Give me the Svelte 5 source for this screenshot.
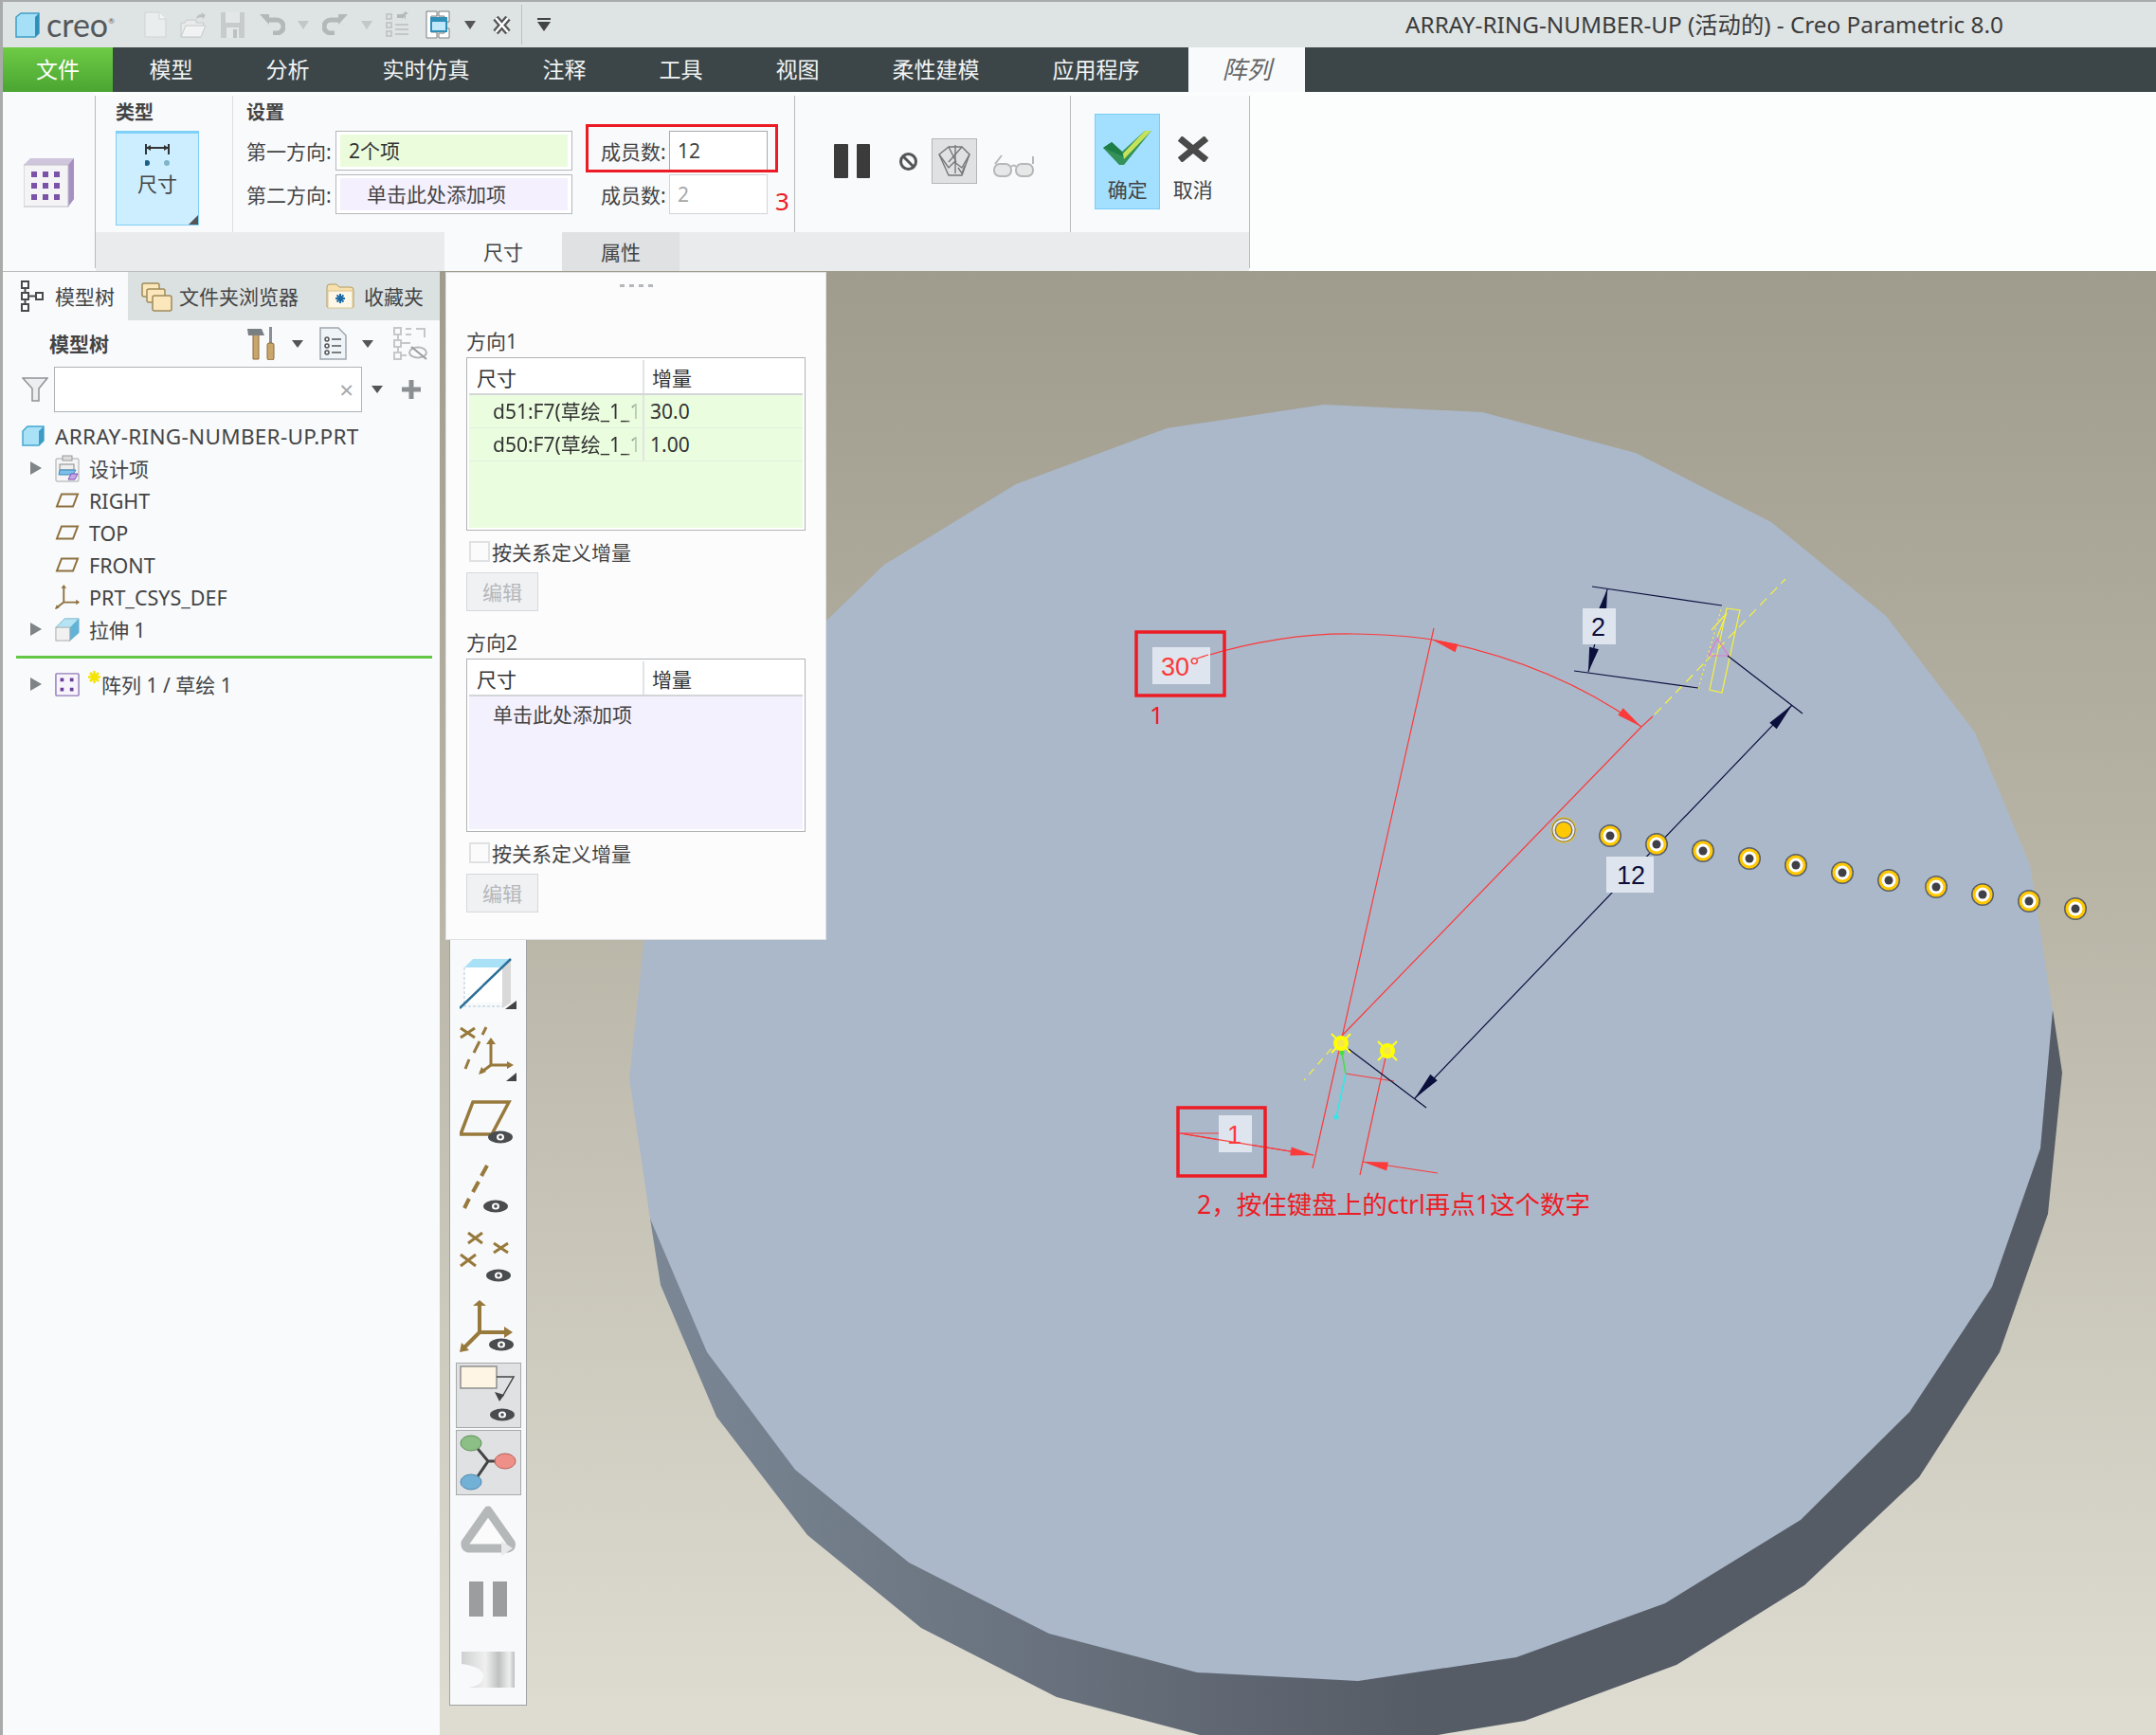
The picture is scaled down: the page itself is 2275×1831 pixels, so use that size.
<script>
  const tabs = ['模型', '分析', '实时仿真', '注释', '工具', '视图', '柔性建模', '应用程序'];

  const facePts = '686,1286 664,1138 680,990 745,830 870,657 933,596 1072,511 1231,452 1397,427 1564,435 1726,478 1869,551 1990,650 2084,773 2142,913 2165,1061 2166,1066 2153,1212 2102,1358 2015,1490 1900,1604 1757,1692 1600,1749 1433,1774 1263,1765 1107,1724 959,1649 839,1551 746,1427';
  const sidePts = '686,1286 697,1356 756,1495 852,1620 972,1718 1115,1791 1266,1831 1517,1831 1609,1816 1769,1757 1904,1673 2025,1559 2110,1427 2161,1281 2176,1132 2166,1066 1433,1500';

  const dots = [
    [1699, 882], [1748, 891], [1797, 898], [1846, 906], [1895, 913], [1944, 921],
    [1993, 929], [2043, 936], [2092, 944], [2141, 951], [2190, 959]
  ];

  // arrow head as polygon points, tip first
  function head(tx, ty, fx, fy, w = 4.5) {
    const dx = fx - tx, dy = fy - ty;
    const l = Math.hypot(dx, dy);
    const nx = -dy / l * w, ny = dx / l * w;
    return `${tx},${ty} ${fx + nx},${fy + ny} ${fx - nx},${fy - ny}`;
  }

  const rows = [
    { label: 'RIGHT', kind: 'plane' },
    { label: 'TOP', kind: 'plane' },
    { label: 'FRONT', kind: 'plane' },
    { label: 'PRT_CSYS_DEF', kind: 'csys' }
  ];
</script>

{#snippet eye(x, y)}
  <ellipse cx={x} cy={y} rx="13" ry="6.5" fill="#4a4d50" />
  <ellipse cx={x} cy={y} rx="4" ry="3.5" fill="#fff" />
  <circle cx={x} cy={y} r="1.8" fill="#4a4d50" />
{/snippet}

{#snippet caret()}
  <svg class="caret" width="12" height="8" viewBox="0 0 12 8"><path d="M0 0h12L6 8z" fill="#555" /></svg>
{/snippet}

{#snippet labelBox(x, y, w, h)}
  <rect {x} {y} width={w} height={h} fill="#dfe5ee" />
{/snippet}

<div class="app">
  <header class="titlebar">
    <div class="logo">
      <svg width="26" height="27" viewBox="0 0 26 27">
        <path d="M1 5 6 1h19v21l-4 4H1z" fill="#a6e0f7" stroke="#3f9fc9" stroke-width="1.5" />
        <path d="M21 5v21l4-4V1z" fill="#2f8fb8" />
      </svg>
      <span class="wordmark">creo<sup>®</sup></span>
    </div>
    <div class="quick">
      <svg width="24" height="28" viewBox="0 0 24 28"><path d="M1 1h15l7 7v19H1z" fill="#eaeded" stroke="#cfd3d3" /><path d="M16 1v7h7" fill="#f5f6f6" stroke="#cfd3d3" /></svg>
      <svg width="28" height="28" viewBox="0 0 28 28"><path d="M1 12h4l2-3h10v3h8l-4 15H1z" fill="#e9ebeb" stroke="#c6caca" /><path d="M1 27l5-12h21l-5 12z" fill="#f1f2f2" stroke="#c6caca" /><path d="M17 8q1-5 6-5l-1-2 5 3-3 4-1-2q-4 0-6 2z" fill="#bcc0c0" /></svg>
      <svg width="27" height="28" viewBox="0 0 27 28"><path d="M1 1h25v27H1z" fill="#c7cbcb" /><path d="M6 1h15v11H6z" fill="#e4e7e7" /><path d="M7 17h13v11H7z" fill="#e4e7e7" /><path d="M14 19h4v9h-4z" fill="#bcc0c0" /></svg>
      <svg width="28" height="22" viewBox="0 0 28 22"><path d="M11 6h8a7 7 0 0 1 0 14h-4" fill="none" stroke="#b3b8b8" stroke-width="5" /><path d="M1 0h10v11z" fill="#b3b8b8" /></svg>
      <svg class="q-caret" width="12" height="9" viewBox="0 0 12 9"><path d="M0 0h12L6 9z" fill="#c3c7c7" /></svg>
      <svg width="28" height="22" viewBox="0 0 28 22"><path d="M17 6H9a7 7 0 0 0 0 14h4" fill="none" stroke="#b3b8b8" stroke-width="5" /><path d="M27 0H17v11z" fill="#b3b8b8" /></svg>
      <svg class="q-caret" width="12" height="9" viewBox="0 0 12 9"><path d="M0 0h12L6 9z" fill="#c3c7c7" /></svg>
      <svg width="25" height="28" viewBox="0 0 25 28"><g fill="none" stroke="#c3c7c7" stroke-width="2"><rect x="1" y="3" width="5" height="5" /><rect x="1" y="12" width="5" height="5" /><rect x="1" y="21" width="5" height="5" /><path d="M10 14h14M10 19h14M10 24h14" /></g><path d="M12 3l6 0-2-3 4 5-4 5 2-3h-6z" fill="#b3b8b8" /><path d="M21 9V3l3 0-3-3-3 3z" fill="#b3b8b8" /></svg>
      <svg class="q-win" width="26" height="30" viewBox="0 0 26 30"><path d="M1 1h11v5H6v17h6v6H1zM14 1h11v11h-5V6h-6zM20 19h5v10H14v-5h6z" fill="#fff" stroke="#7a7f7f" /><rect x="6" y="8" width="16" height="14" fill="#bfe8fb" stroke="#2f8fb8" stroke-width="2" /><rect x="6" y="8" width="16" height="4" fill="#2f8fb8" /></svg>
      <svg class="q-caret2" width="12" height="9" viewBox="0 0 12 9"><path d="M0 0h12L6 9z" fill="#555" /></svg>
      <svg class="q-close" width="21" height="23" viewBox="0 0 21 23"><path d="M4 4l13 15M17 4 4 19" stroke="#555" stroke-width="7" fill="none" /><path d="M4 4l13 15M17 4 4 19" stroke="#fff" stroke-width="2.5" fill="none" /></svg>
      <i class="q-sep"></i>
      <svg class="q-more" width="14" height="14" viewBox="0 0 14 14"><path d="M0 0h14v2H0zM0 4h14L7 14z" fill="#444" /></svg>
    </div>
    <div class="app-title">ARRAY-RING-NUMBER-UP (活动的) - Creo Parametric 8.0</div>
  </header>

  <nav class="tabbar">
    <div class="file-tab">文件</div>
    {#each tabs as t}
      <div class="tab">{t}</div>
    {/each}
    <div class="tab-pattern">阵列</div>
  </nav>

  <section class="ribbon">
    <div class="rb-icon">
      <svg width="54" height="53" viewBox="0 0 54 53">
        <path d="M0 8 7 1h46v43l-6 8H0z" fill="#cfc6de" />
        <path d="M47 8v44l6-8V1z" fill="#a78fc4" />
        <rect x="0" y="8" width="47" height="44" fill="#f4f4f6" stroke="#bdbdc4" />
        {#each [0, 1, 2] as r}
          {#each [0, 1, 2] as c}
            <rect x={8 + c * 12} y={15 + r * 12} width="6" height="6" fill="#7a52a8" />
          {/each}
        {/each}
      </svg>
    </div>
    <div class="rb-main">
      <div class="rb-groups">
        <div class="grp grp-type">
          <div class="grp-title">类型</div>
          <div class="type-btn">
            <svg width="26" height="24" viewBox="0 0 26 24">
              <path d="M1 1v11M25 1v11M1 5h24" stroke="#333" stroke-width="2" fill="none" />
              <path d="M1 5l5-3v6zM25 5l-5-3v6z" fill="#333" />
              <circle cx="2" cy="21" r="3" fill="#1c5f88" /><circle cx="23" cy="21" r="3" fill="#7fb4c9" />
            </svg>
            <span>尺寸</span>
            <i class="corner"></i>
          </div>
        </div>
        <div class="grp grp-set">
          <div class="grp-title">设置</div>
          <div class="set-grid">
            <span class="lbl">第一方向:</span>
            <div class="coll"><div class="fill green">2个项</div></div>
            <span class="lbl lbl-n">成员数:</span>
            <div class="num">12</div>
            <span></span>

            <span class="lbl">第二方向:</span>
            <div class="coll"><div class="fill lav">单击此处添加项</div></div>
            <span class="lbl lbl-n">成员数:</span>
            <div class="num off">2</div>
            <span class="red3">3</span>
          </div>
          <i class="redbox"></i>
        </div>
        <div class="grp grp-ctl">
          <svg class="pause" width="38" height="36" viewBox="0 0 38 36"><rect x="0" width="15" height="36" rx="1" fill="#3b3b3b" /><rect x="24" width="14" height="36" rx="1" fill="#3b3b3b" /></svg>
          <svg class="stop" width="21" height="21" viewBox="0 0 21 21"><circle cx="10.5" cy="10.5" r="8" fill="none" stroke="#555" stroke-width="3" /><path d="M5 5l11 11" stroke="#555" stroke-width="3" /></svg>
          <div class="preview">
            <svg width="36" height="38" viewBox="0 0 36 38"><g fill="none" stroke="#777" stroke-width="1.4"><path d="M2 12 12 4h14l8 8-8 22H12z" /><path d="M12 4 20 20M26 4 12 20M2 12l10 14 6-6 8 6 8-14" /><path d="M19 2v30M29 24l-3 8-4-6" /></g></svg>
          </div>
          <svg class="glasses" width="45" height="25" viewBox="0 0 45 25"><g fill="#e6e8e8" stroke="#b5b8b8" stroke-width="2"><rect x="2" y="11" width="18" height="13" rx="6" /><rect x="25" y="11" width="18" height="13" rx="6" /></g><path d="M20 14q3-3 5 0M3 11 10 2M43 11V3" fill="none" stroke="#b5b8b8" stroke-width="2" /></svg>
        </div>
        <div class="grp grp-act">
          <div class="act ok">
            <svg width="51" height="36" viewBox="0 0 51 36"><path d="M0 18 9 12 20 22 44 0h7L22 36h-5z" fill="#33915a" /><path d="M44 0h7L22 30 21 24z" fill="#c4e35a" /><path d="M0 18 9 12 20 22 21 27z" fill="#1f7d46" /></svg>
            <span>确定</span>
          </div>
          <div class="act">
            <svg width="34" height="27" viewBox="0 0 34 27"><path d="M3 2l28 23M31 2 3 25" stroke="#4a4a4a" stroke-width="7" fill="none" /></svg>
            <span class="cancel">取消</span>
          </div>
        </div>
      </div>
      <div class="strip">
        <div class="strip-tab active">尺寸</div>
        <div class="strip-tab">属性</div>
      </div>
    </div>
  </section>

  <main class="workspace">
    <aside class="left">
      <div class="l-tabs">
        <div class="l-tab active">
          <svg width="24" height="33" viewBox="0 0 24 33"><g fill="#fff" stroke="#4a4a4a" stroke-width="2"><rect x="1" y="1" width="7" height="7" /><rect x="1" y="13" width="7" height="7" /><rect x="1" y="25" width="7" height="7" /><rect x="16" y="13" width="7" height="7" /></g><path d="M4.500 8v5M4.500 20v5M8 16.500h8" stroke="#4a4a4a" stroke-width="2" /></svg>
          <span>模型树</span>
        </div>
        <div class="l-tab t2">
          <svg width="33" height="33" viewBox="0 0 33 33"><g fill="#fbe7bb" stroke="#a08a5a" stroke-width="1.500"><rect x="1" y="3" width="18" height="14" rx="2" /><rect x="6" y="9" width="19" height="14" rx="2" /><rect x="12" y="16" width="20" height="16" rx="2" /></g></svg>
          <span>文件夹浏览器</span>
        </div>
        <div class="l-tab t3">
          <svg width="30" height="27" viewBox="0 0 30 27"><path d="M1 4q0-3 3-3h7l3 3h12q3 0 3 3v18H1z" fill="#f6e0ae" stroke="#b49a60" /><rect x="2" y="8" width="26" height="18" fill="#fdf7e8" stroke="#d9c48f" /><path d="M15 11v10M10 16h10M11.500 12.500l7 7M18.500 12.500l-7 7" stroke="#1c6aa5" stroke-width="2" /></svg>
          <span>收藏夹</span>
        </div>
      </div>
      <div class="l-head">
        <b>模型树</b>
        <svg class="i-tools" width="30" height="35" viewBox="0 0 30 35"><path d="M6 8h6v26H6z" fill="#c9a66b" stroke="#8a6c3a" /><path d="M0 2h15l3 7H1z" fill="#7a7f84" /><rect x="23" y="0" width="3" height="17" fill="#8a9096" /><rect x="21" y="17" width="7" height="18" rx="2" fill="#c9a66b" stroke="#8a6c3a" /></svg>
        <span class="c1">{@render caret()}</span>
        <svg class="i-doc" width="29" height="35" viewBox="0 0 29 35"><path d="M1 1h19l8 8v25H1z" fill="#eef4f8" stroke="#9fa7ad" stroke-width="1.500" /><g stroke="#555" stroke-width="1.500" fill="none"><circle cx="8" cy="13" r="2" /><circle cx="8" cy="20" r="2" /><circle cx="8" cy="27" r="2" /><path d="M13 13h10M13 20h10M13 27h10" /></g></svg>
        <span class="c2">{@render caret()}</span>
        <svg class="i-hide" width="36" height="35" viewBox="0 0 36 35"><g fill="none" stroke="#c5c8ca" stroke-width="2"><rect x="1" y="1" width="7" height="7" /><rect x="1" y="14" width="7" height="7" /><rect x="1" y="27" width="7" height="7" /><path d="M13 2h6M13 8h6M24 2h9v9M5 8v6M5 21v6M8 17h10M8 30h6" /></g><ellipse cx="26" cy="27" rx="9" ry="5.500" fill="none" stroke="#b5b8ba" stroke-width="2" /><path d="M19 21l16 13" stroke="#9a9da0" stroke-width="2" /></svg>
      </div>
      <div class="l-search">
        <svg width="28" height="26" viewBox="0 0 28 26"><path d="M1 1h26L18 12v13h-7V12z" fill="#eceeef" stroke="#8e9296" stroke-width="1.500" /></svg>
        <div class="s-input"><span>×</span></div>
        <span class="c3">{@render caret()}</span>
        <svg class="plus" width="20" height="20" viewBox="0 0 20 20"><path d="M7.500 0h5v7.500H20v5h-7.500V20h-5v-7.500H0v-5h7.500z" fill="#8c8f92" /></svg>
      </div>
      <div class="tree">
        <div class="row top">
          <svg width="24" height="22" viewBox="0 0 24 22"><path d="M1 6 6 1h17v15l-5 5H1z" fill="#a9e2f7" stroke="#45a7d0" stroke-width="1.500" /><path d="M18 6v15l5-5V1z" fill="#3d9cc6" /></svg>
          <span>ARRAY-RING-NUMBER-UP.PRT</span>
        </div>
        <div class="row">
          <i class="tri"></i>
          <svg width="26" height="29" viewBox="0 0 26 29"><rect x="1" y="4" width="24" height="24" rx="1" fill="#f5f5f5" stroke="#a5a8ab" /><rect x="8" y="1" width="10" height="5" fill="#ddd" stroke="#999" /><rect x="5" y="10" width="15" height="6" fill="#eee" stroke="#888" /><path d="M5 16h17l-3 5H4z" fill="#7cc0ea" stroke="#3d89ba" /><path d="M14 26l3-6h7l-3 6z" fill="#c6a9e6" stroke="#7f4fb5" /></svg>
          <span>设计项</span>
        </div>
        {#each rows as r}
          <div class="row">
            <i class="tri none"></i>
            {#if r.kind === 'plane'}
              <svg width="26" height="16" viewBox="0 0 26 16"><path d="M7 1.500h17L19 14.500H2z" fill="none" stroke="#8d713e" stroke-width="2" /></svg>
            {:else}
              <svg width="26" height="28" viewBox="0 0 28 28"><path d="M10 2v18L1 27M10 20h17" fill="none" stroke="#8d713e" stroke-width="2" /><path d="M10 0l3 4H7zM28 20l-4 3v-6zM0 28l2-5 3 3z" fill="#8d713e" /></svg>
            {/if}
            <span class="lat">{r.label}</span>
          </div>
        {/each}
        <div class="row">
          <i class="tri"></i>
          <svg width="26" height="28" viewBox="0 0 28 28"><path d="M1 12 11 2h16v16L17 27z" fill="#b5e4f4" stroke="#7eb5c9" /><path d="M17 12 27 2v16L17 27z" fill="#62b4d6" /><rect x="1" y="12" width="16" height="15" fill="#f1f1f1" stroke="#a8a8a8" /></svg>
          <span>拉伸 1</span>
        </div>
        <div class="insert"></div>
        <div class="row last">
          <i class="tri"></i>
          <svg width="26" height="27" viewBox="0 0 28 27"><rect x="1" y="1" width="26" height="25" rx="1" fill="#f7f5fb" stroke="#8f79b5" stroke-width="1.500" /><g fill="#6a3f9a"><rect x="6" y="6" width="4" height="4" /><rect x="17" y="6" width="4" height="4" /><rect x="6" y="17" width="4" height="4" /><rect x="17" y="17" width="4" height="4" /></g></svg>
          <svg class="star" width="13" height="13" viewBox="0 0 13 13"><path d="M6.500 0v13M0 6.500h13M2 2l9 9M11 2l-9 9" stroke="#f5e300" stroke-width="2.500" /></svg>
          <span class="tight">阵列 1 / 草绘 1</span>
        </div>
      </div>
    </aside>

    <div class="canvas">
      <svg class="scene" width="1811" height="1545" viewBox="464 286 1811 1545">
        <defs>
          <linearGradient id="bg" x1="0" y1="0" x2="0" y2="1">
            <stop offset="0" stop-color="#9f9c8e" />
            <stop offset="0.45" stop-color="#bab7a9" />
            <stop offset="1" stop-color="#dfddd2" />
          </linearGradient>
          <linearGradient id="side" gradientUnits="userSpaceOnUse" x1="690" y1="0" x2="1500" y2="0">
            <stop offset="0" stop-color="#7b8795" />
            <stop offset="1" stop-color="#565c66" />
          </linearGradient>
        </defs>
        <rect x="464" y="286" width="1811" height="1545" fill="url(#bg)" />
        <polygon points={sidePts} fill="url(#side)" />
        <polygon points={facePts} fill="#abb8ca" />

        <g fill="none" stroke="#fb3a3a" stroke-width="1.200">
          <path d="M1513 663 1385 1233" />
          <path d="M1732 767 1744 756M1732 767 1416 1093" />
          <path d="M1263 695Q1350 668 1428 669 1480 670 1511 675 1640 700 1732 767" />
          <path d="M1462 1116 1435 1240" />
          <path d="M1420 1133 1471 1141" />
          <path d="M1245 1196H1286M1245 1196 1386 1219M1438 1226 1517 1238" />
        </g>
        <polygon points={head(1511, 675, 1537, 684)} fill="#fb3a3a" />
        <polygon points={head(1732, 767, 1710, 751)} fill="#fb3a3a" />
        <polygon points={head(1386, 1219, 1362, 1215)} fill="#fb3a3a" />
        <polygon points={head(1438, 1226, 1464, 1231)} fill="#fb3a3a" />

        <g fill="none" stroke="#f6f23a" stroke-width="1.200">
          <path d="M1746 754 1884 611" stroke-dasharray="10 6" />
          <path d="M1414 1096 1376 1140" stroke-dasharray="8 6" />
          <path d="M1822 642 1836 644 1817 731 1804 728z" />
          <path d="M1792 727 1817 640" stroke-dasharray="2 3" />
          <path d="M1806 665 1822 647 1812 672" />
        </g>
        <path d="M1812 674 1824 692H1803z" fill="none" stroke="#e47ad2" stroke-width="1.200" />

        <g fill="none" stroke="#0b0f3c" stroke-width="1.200">
          <path d="M1823 692 1902 753M1423 1107 1505 1169M1891 744 1493 1159" />
          <path d="M1680 619 1817 639M1661 708 1792 726M1696 622 1676 709" />
        </g>
        <polygon points={head(1891, 744, 1871, 766, 5)} fill="#0b0f3c" />
        <polygon points={head(1493, 1159, 1513, 1137, 5)} fill="#0b0f3c" />
        <polygon points={head(1696, 622, 1690, 648, 5)} fill="#0b0f3c" />
        <polygon points={head(1676, 709, 1682, 684, 5)} fill="#0b0f3c" />

        <path d="M1416 1111 1420 1133" stroke="#43e043" stroke-width="1.500" fill="none" />
        <path d="M1420 1133 1410 1179" stroke="#30e8e8" stroke-width="1.500" fill="none" />
        <circle cx="1416" cy="1111" r="2.500" fill="#43e043" />
        <circle cx="1410" cy="1179" r="2.500" fill="#30e8e8" />
        {#each [[1415, 1101], [1464, 1109]] as [x, y]}
          <path d={`M${x - 10} ${y - 10}L${x + 10} ${y + 10}M${x + 10} ${y - 10}L${x - 10} ${y + 10}`} stroke="#ffff20" stroke-width="2" />
          <circle cx={x} cy={y} r="8" fill="#ffff00" />
          <circle cx={x} cy={y} r="4" fill="#f5e94a" />
        {/each}

        <circle cx="1650" cy="876" r="13.500" fill="#f5c400" />
        <circle cx="1650" cy="876" r="12.500" fill="#6a6a6a" />
        <circle cx="1650" cy="876" r="11.500" fill="#f0f0f0" />
        <circle cx="1650" cy="876" r="9.500" fill="#777" />
        <circle cx="1650" cy="876" r="8" fill="#ffc800" />
        {#each dots as [x, y]}
          <circle cx={x} cy={y} r="12" fill="#5a5f68" />
          <circle cx={x} cy={y} r="10.500" fill="#ffc800" />
          <circle cx={x} cy={y} r="7.500" fill="#fff" />
          <circle cx={x} cy={y} r="4.500" fill="#3f4147" />
        {/each}

        {@render labelBox(1216, 683, 61, 39)}
        {@render labelBox(1670, 642, 35, 38)}
        {@render labelBox(1695, 904, 50, 38)}
        {@render labelBox(1286, 1177, 35, 39)}
        <text class="dim red" x="1225" y="713">30°</text>
        <text class="dim navy" x="1679" y="671">2</text>
        <text class="dim navy" x="1706" y="933">12</text>
        <text class="dim red" x="1295" y="1207">1</text>
        <path d="M1263 695 1275 691M1245 1196 1386 1219" stroke="#fb3a3a" stroke-width="1.200" fill="none" />

        <g fill="none" stroke="#ed1c24" stroke-width="3.500">
          <rect x="1199" y="667" width="93" height="67" />
          <rect x="1243" y="1169" width="92" height="72" />
        </g>
        <text class="note" x="1213" y="764">1</text>
        <text class="note wide" x="1263" y="1281">2，按住键盘上的ctrl再点1这个数字</text>
      </svg>

      <div class="toolbar">
        <div class="tool">
          <svg width="60" height="55" viewBox="0 0 60 55"><path d="M5 10 14 1h40v46H5z" fill="#fff" /><path d="M5 10 14 1h40l-9 9z" fill="#a9e2f7" /><path d="M45 10l9-9v46l-9 6z" fill="#d9d9d9" /><path d="M5 10v41h40" fill="none" stroke="#a9c8d8" stroke-dasharray="3 2" /><path d="M0 53 54 1" stroke="#2a6f95" stroke-width="2.500" /><path d="M60 45v9H48z" fill="#444" /></svg>
        </div>
        <div class="tool">
          <svg width="60" height="60" viewBox="0 0 60 60"><g stroke="#97793c" stroke-width="3" fill="none"><path d="M1 3 16 13M16 3 1 13M28 2 24 10M21 17 15 29M10 36 6 46" /><path d="M33 19V42H54M33 42 22 50" /></g><path d="M33 13l5 7H28zM57 42l-7 4v-8zM20 52l3-8 5 5z" fill="#97793c" /><path d="M60 50v9H49z" fill="#444" /></svg>
        </div>
        <div class="tool">
          <svg width="60" height="48" viewBox="0 0 60 48"><path d="M14 2H52L34 36H1z" fill="none" stroke="#97793c" stroke-width="3.500" />{@render eye(43, 39)}</svg>
        </div>
        <div class="tool">
          <svg width="60" height="53" viewBox="0 0 60 53"><path d="M29 1 23 12M20 18 14 29M10 36 5 46" stroke="#97793c" stroke-width="4" fill="none" />{@render eye(38, 44)}</svg>
        </div>
        <div class="tool">
          <svg width="60" height="54" viewBox="0 0 60 54"><path d="M9 1 24 12M24 1 9 12M1 24 17 36M17 24 1 36M36 12 51 22M51 12 36 22" stroke="#97793c" stroke-width="3" fill="none" />{@render eye(41, 46)}</svg>
        </div>
        <div class="tool">
          <svg width="60" height="56" viewBox="0 0 60 56"><path d="M21 5V34H52M21 34 3 52" stroke="#97793c" stroke-width="4" fill="none" /><path d="M21 0l7 6H14zM56 34l-9 6V28zM0 55l2-10 8 8z" fill="#97793c" />{@render eye(44, 47)}</svg>
        </div>
        <div class="tool boxed">
          <svg width="60" height="62" viewBox="0 0 60 62"><rect x="1" y="1" width="38" height="23" fill="#fff5e4" stroke="#8e8e8e" stroke-width="1.500" /><path d="M39 12H57L45 33" fill="none" stroke="#444" stroke-width="1.500" /><path d="M42 38 37 28l10 3z" fill="#444" />{@render eye(45, 52)}</svg>
        </div>
        <div class="tool boxed">
          <svg width="60" height="60" viewBox="0 0 60 60"><path d="M15 10 30 28 15 50M30 28H48" stroke="#444" stroke-width="3" fill="none" /><ellipse cx="12" cy="9" rx="11" ry="8" fill="#8bbf85" stroke="#5f8f5a" /><ellipse cx="48" cy="28" rx="11" ry="8" fill="#ee8f88" stroke="#b5605a" /><ellipse cx="12" cy="50" rx="11" ry="8" fill="#73b0d6" stroke="#4f88ad" /></svg>
        </div>
        <div class="tool">
          <svg width="60" height="54" viewBox="0 0 60 54"><path d="M30 6 6 40q-1 6 5 6h38q7 0 5-6z" fill="#fbfbfc" stroke="#b5b8b8" stroke-width="9" stroke-linejoin="round" /><path d="M44 38l12 8-12 8z" fill="#e8e9e9" /></svg>
        </div>
        <div class="tool">
          <svg width="40" height="37" viewBox="0 0 40 37"><rect x="0" width="15" height="37" fill="#9b9d9f" /><rect x="25" width="15" height="37" fill="#9b9d9f" /></svg>
        </div>
        <div class="tool">
          <svg width="56" height="38" viewBox="0 0 56 38"><defs><linearGradient id="g11"><stop offset="0" stop-color="#cfd0d0" /><stop offset="0.45" stop-color="#f0f0f0" /><stop offset="0.7" stop-color="#bfc1c1" /><stop offset="0.9" stop-color="#eeeeee" /><stop offset="1" stop-color="#bdbfbf" /></linearGradient></defs><path d="M0 0H56V38H8q14-2 15-12 0-10-23-13z" fill="url(#g11)" /></svg>
        </div>
      </div>

      <div class="props">
        <div class="grip"><i></i><i></i><i></i><i></i></div>
        <div class="p-title first">方向1</div>
        <div class="tbl">
          <div class="th"><span class="c-a">尺寸</span><span class="c-b">增量</span></div>
          <div class="tb green">
            <div class="tr"><span class="c-a"><span class="clip">d51:F7(草绘_1_1</span></span><span class="c-b val">30.0</span></div>
            <div class="tr"><span class="c-a"><span class="clip">d50:F7(草绘_1_1</span></span><span class="c-b val">1.00</span></div>
          </div>
        </div>
        <label class="check"><i></i>按关系定义增量</label>
        <div class="btn">编辑</div>
        <div class="p-title second">方向2</div>
        <div class="tbl">
          <div class="th"><span class="c-a">尺寸</span><span class="c-b">增量</span></div>
          <div class="tb lav"><div class="hint">单击此处添加项</div></div>
        </div>
        <label class="check"><i></i>按关系定义增量</label>
        <div class="btn">编辑</div>
      </div>
    </div>
  </main>
</div>

<style>
  :global(body) { margin: 0; background: #fff; }

  .app {
    width: 2275px;
    height: 1831px;
    overflow: hidden;
    display: flex;
    flex-direction: column;
    box-sizing: border-box;
    border-left: 3px solid #a9abab;
    border-top: 2px solid #a9abab;
    font-family: "Noto Sans", "Noto Sans CJK SC", sans-serif;
    font-size: 21px;
    color: #444;
    background: #f8fafc;
  }

  /* title bar */
  .titlebar {
    height: 48px;
    flex: none;
    background: #dee3e3;
    display: flex;
    align-items: center;
    position: relative;
  }
  .logo { display: flex; align-items: center; gap: 7px; margin-left: 13px; width: 136px; }
  .wordmark { font-family: "Lato", sans-serif; font-size: 34px; font-weight: 400; color: #55585b; line-height: 1; letter-spacing: 0; }
  .wordmark sup { font-size: 8px; vertical-align: 14px; }
  .quick { display: flex; align-items: center; gap: 14px; height: 100%; }
  .q-caret { margin-left: -1px; }
  .q-win { margin-left: 3px; }
  .q-caret2 { margin-left: 1px; }
  .q-close { margin-left: 3px; }
  .q-sep { width: 1px; height: 42px; background: #bcc0c0; margin: 0 -1px 0 -4px; }
  .q-more { margin-left: 3px; }
  .app-title {
    position: absolute;
    left: 1480px;
    top: 10px;
    font-size: 24.3px;
    line-height: 28px;
    color: #3c3c3c;
    white-space: nowrap;
  }

  /* ribbon tabs */
  .tabbar {
    height: 47px;
    flex: none;
    background: #3c4648;
    display: flex;
    color: #fff;
    font-size: 23px;
    line-height: 47px;
  }
  .file-tab {
    width: 116px;
    text-align: center;
    background: linear-gradient(#6ecb45, #4aa532);
  }
  .tab { padding: 0 38.5px; color: #f2f4f4; }
  .tab-pattern {
    margin-left: 13px;
    width: 123px;
    text-align: center;
    background: #f8fafc;
    color: #666;
    font-style: italic;
    font-size: 26px;
  }

  /* ribbon */
  .ribbon { height: 189px; flex: none; display: flex; background: #fcfdfd; }
  .rb-icon {
    width: 97px;
    display: flex;
    box-sizing: border-box;
    padding: 69px 0 0 22px;
    background: #f8fafc;
  }
  .rb-main { width: 1219px; display: flex; flex-direction: column; background: #f8fafc; border-left: 1px solid #b9bcbc; border-right: 1px solid #b9bcbc; box-sizing: border-box; margin-top: 4px; height: 182px; }
  .rb-groups { height: 144px; display: flex; flex: none; }
  .grp { box-sizing: border-box; position: relative; }
  .grp-title { font-weight: 700; font-size: 20px; line-height: 28px; margin-top: 4px; }
  .grp-type { width: 145px; padding-left: 21px; border-right: 1px solid #dcdfe0; }
  .type-btn {
    width: 88px;
    height: 100px;
    margin-top: 5px;
    box-sizing: border-box;
    background: #cdeefe;
    border: 1px solid #7fd0f8;
    border-top-width: 3px;
    display: flex;
    flex-direction: column;
    align-items: center;
    padding-top: 10px;
    position: relative;
  }
  .type-btn span { line-height: 28px; margin-top: 5px; }
  .corner { position: absolute; right: 0; bottom: 0; width: 0; height: 0; border: 5px solid #555; border-top-color: transparent; border-left-color: transparent; }
  .grp-set { width: 594px; padding-left: 14px; border-right: 1px solid #b9bcbc; }
  .set-grid {
    display: grid;
    grid-template-columns: 94px 250px 30px 72px 104px 20px;
    grid-template-rows: 42px 42px;
    row-gap: 4px;
    margin-top: 5px;
    align-items: center;
  }
  .set-grid .lbl-n { grid-column: 4; }
  .set-grid .coll { grid-column: 2; }
  .lbl { white-space: nowrap; }
  .coll {
    height: 42px;
    box-sizing: border-box;
    border: 1px solid #b5b7ba;
    padding: 3px 4px;
    background: #fff;
  }
  .fill { height: 100%; line-height: 34px; }
  .fill.green { background: #ebfcdd; padding-left: 9px; color: #333; }
  .fill.lav { background: #f4f0fe; padding-left: 28px; }
  .num {
    height: 42px;
    box-sizing: border-box;
    border: 1px solid #a9abab;
    background: #fff;
    padding-left: 8px;
    line-height: 40px;
  }
  .num.off { border-color: #d2d4d5; color: #a8a8a8; }
  .red3 { color: #ed1c24; font-size: 26px; line-height: 26px; margin: 14px 0 0 8px; }
  .redbox {
    position: absolute;
    left: 372px;
    top: 30px;
    width: 203px;
    height: 51px;
    box-sizing: border-box;
    border: 3.5px solid #ed1c24;
  }
  .grp-ctl { width: 291px; border-right: 1px solid #b9bcbc; display: flex; align-items: flex-start; }
  .pause { margin: 51px 0 0 41px; }
  .stop { margin: 59px 0 0 30px; }
  .preview {
    width: 48px;
    height: 48px;
    margin: 45px 0 0 14px;
    box-sizing: border-box;
    background: #e0e1e3;
    border: 1px solid #b5b5b5;
    display: flex;
    align-items: center;
    justify-content: center;
  }
  .glasses { margin: 61px 0 0 16px; }
  .grp-act { width: 188px; display: flex; padding: 19px 0 0 25px; gap: 0; align-items: flex-start; }
  .act {
    width: 69px;
    height: 101px;
    box-sizing: border-box;
    display: flex;
    flex-direction: column;
    align-items: center;
    padding-top: 24px;
  }
  .act span { line-height: 28px; margin-top: 12px; }
  .act span.cancel { margin-top: 15px; }
  .act.ok { background: #a3dfff; border: 1px solid #7ccdf7; padding-top: 17px; }
  .act.ok span { margin-top: 12px; }
  .strip { flex: none; height: 41px; display: flex; margin-top: 0; padding-left: 368px; background: #e9ebed; }
  .strip-tab { width: 124px; text-align: center; line-height: 42px; background: #dfe1e3; }
  .strip-tab.active { background: #f8fafc; }

  /* main */
  .workspace { flex: 1; display: flex; min-height: 0; border-top: 0; }
  .left { width: 461px; flex: none; background: #f8fafc; display: flex; flex-direction: column; border-top: 2px solid #b9bcbc; box-sizing: border-box; }
  .l-tabs { height: 51px; margin-top: -1px; flex: none; display: flex; background: #dbe1e1; }
  .l-tab { display: flex; align-items: center; box-sizing: border-box; }
  .l-tab span { margin-top: -2px; }
  .l-tab.active { width: 132px; background: #f8fafc; padding-left: 19px; gap: 12px; }
  .l-tab.t2 { padding-left: 14px; gap: 7px; width: 209px; }
  .l-tab.t3 { gap: 10px; }
  .l-head { height: 49px; flex: none; display: flex; align-items: center; position: relative; }
  .l-head b { margin: -2px 0 0 49px; font-weight: 700; width: 209px; }
  .c1 { margin-left: 17px; display: flex; }
  .c2 { margin-left: 16px; display: flex; }
  .c3 { margin-left: 10px; display: flex; }
  .i-tools { margin-left: 0; }
  .i-doc { margin-left: 17px; }
  .i-hide { margin-left: 21px; }
  .l-search { height: 48px; flex: none; display: flex; align-items: center; padding-left: 20px; }
  .s-input {
    width: 325px;
    height: 48px;
    margin-left: 6px;
    box-sizing: border-box;
    background: #fff;
    border: 1px solid #b0b3b6;
    display: flex;
    justify-content: flex-end;
    align-items: center;
    padding-right: 8px;
    font-size: 26px;
    color: #a5a8ab;
  }
  .plus { margin-left: 20px; }
  .tree { padding-top: 8px; }
  .row { height: 34px; display: flex; align-items: center; padding-left: 29px; white-space: nowrap; font-size: 21px; color: #444; }
  .row svg { flex: none; }
  .row.top { padding-left: 20px; gap: 11px; }
  .row.top span { font-size: 22.5px; letter-spacing: 0.3px; margin-left: 0; }
  .row span.lat { font-size: 21.5px; }
  .tri { width: 0; height: 0; border-left: 12px solid #7f8487; border-top: 7px solid transparent; border-bottom: 7px solid transparent; margin-right: 14px; flex: none; }
  .tri.none { border-left-color: transparent; }
  .row span { margin-left: 10px; }
  .insert { height: 3px; background: #63c743; margin: 11px 8px 10px 14px; }
  .row.last .star { margin: -16px 0 0 9px; }
  .row.last .tight { margin-left: 1px; }

  /* graphics area */
  .canvas { flex: 1; position: relative; min-width: 0; overflow: hidden; }
  .scene { position: absolute; left: 0; top: 0; display: block; }
  .dim { font-family: "Liberation Sans", sans-serif; font-size: 27px; }
  .dim.red { fill: #fb3a3a; }
  .dim.navy { fill: #0b0f3c; }
  .note { font-family: "Noto Sans", "Noto Sans CJK SC", sans-serif; font-size: 26px; fill: #ed1c24; }
  .note.wide { font-size: 26.5px; }

  .toolbar {
    position: absolute;
    left: 10px;
    top: 704px;
    width: 82px;
    height: 810px;
    box-sizing: border-box;
    padding-top: 11px;
    background: #f8f9fb;
    border: 1px solid #a0a2a4;
    display: grid;
    grid-template-rows: 73px 74px 71px 70px 73px 73px 72px 71px 71px 74px 76px;
    justify-items: center;
    align-items: center;
  }
  .tool { display: flex; align-items: center; justify-content: center; }
  .tool.boxed { width: 69px; height: 69px; box-sizing: border-box; background: #e0e1e3; border: 1px solid #a8aaac; }

  .props {
    position: absolute;
    left: 6px;
    top: 1px;
    width: 402px;
    height: 705px;
    box-sizing: border-box;
    padding: 0 21px;
    background: #fcfcfd;
    border: 1px solid #dfe1e3;
    color: #444;
  }
  .grip { display: flex; justify-content: center; gap: 5px; padding-top: 12px; height: 4px; }
  .grip i { width: 5px; height: 3px; background: #b5b7ba; }
  .p-title { line-height: 30px; font-size: 21px; }
  .p-title.first { margin-top: 41px; }
  .p-title.second { margin-top: 18px; }
  .tbl {
    width: 358px;
    margin-top: 2px;
    height: 183px;
    box-sizing: border-box;
    border: 1px solid #b0b3b6;
    padding: 2px;
    display: flex;
    flex-direction: column;
    background: #fff;
  }
  .th { height: 37px; flex: none; display: flex; border-bottom: 2px solid #d3d5d7; line-height: 38px; color: #333; box-sizing: border-box; }
  .c-a { width: 185px; flex: none; box-sizing: border-box; padding-left: 8px; border-right: 2px solid #e1e3e5; overflow: hidden; }
  .c-b { padding-left: 8px; }
  .tb { flex: 1; }
  .tb.green { background: #ebfddf; }
  .tb.lav { background: #f4f1fe; }
  .tr { height: 35px; display: flex; line-height: 34px; border-bottom: 1px solid #e2efe0; box-sizing: border-box; color: #333; }
  .tr .c-a { padding-left: 25px; }
  .tr .c-b { padding-left: 6px; }
  .clip { display: block; white-space: nowrap; overflow: hidden; width: 155px; mask-image: linear-gradient(to right, #000 90%, transparent); }
  .hint { padding: 2px 0 0 25px; line-height: 34px; }
  .check { display: flex; align-items: center; margin-top: 11px; height: 22px; padding-left: 3px; white-space: nowrap; }
  .check i { width: 18px; height: 18px; border: 2px solid #dfe1e3; background: #fbfbfc; margin-right: 2px; flex: none; }
  .btn {
    width: 76px;
    height: 41px;
    margin-top: 11px;
    box-sizing: border-box;
    background: #eff1f3;
    border: 1px solid #d5d8db;
    text-align: center;
    color: #b5b7ba;
    line-height: 40px;
  }
</style>
